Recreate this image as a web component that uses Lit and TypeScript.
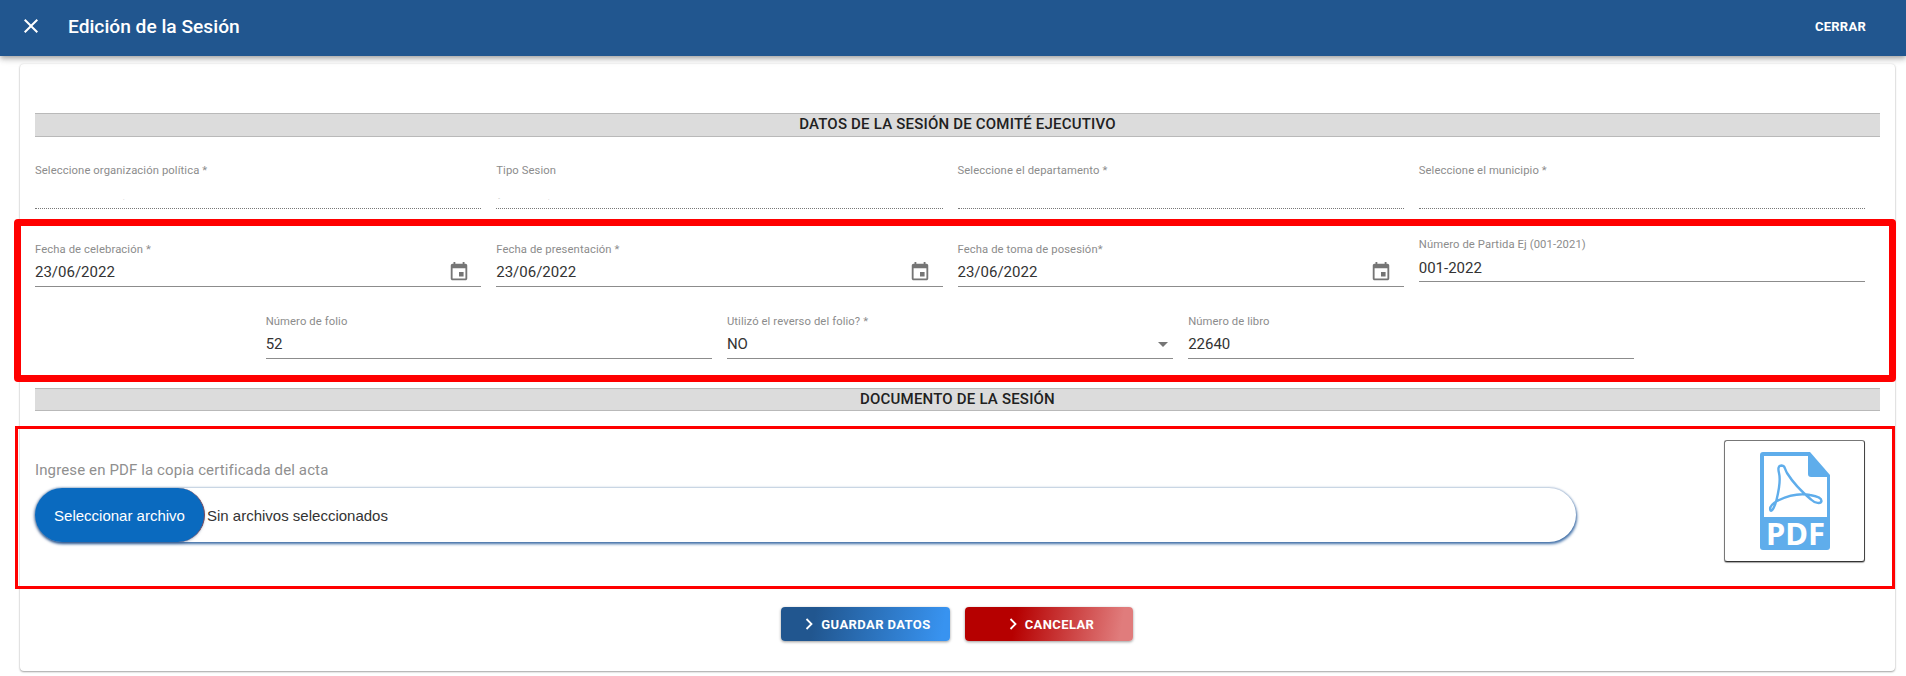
import { LitElement, html, css, svg } from "lit";
import { customElement } from "lit/decorators.js";

const calendar = html`<svg class="cal" viewBox="0 0 24 24"><path d="M17 12h-5v5h5v-5zM16 1v2H8V1H6v2H5c-1.11 0-1.99.9-1.99 2L3 19c0 1.1.89 2 2 2h14c1.1 0 2-.9 2-2V5c0-1.1-.9-2-2-2h-1V1h-2zm3 18H5V8h14v11z"/></svg>`;
const chevron = html`<svg class="chev" viewBox="0 0 8 12"><path d="M1.5 1 L6.5 6 L1.5 11"/></svg>`;

@customElement("app-root")
export class AppRoot extends LitElement {
  static styles = css`
    :host { display: block; height: 676px; overflow: hidden; background: #fff; font-family: Roboto, sans-serif; color: #212121; }
    .top { display: flex; align-items: center; height: 56px; box-sizing: border-box; padding: 0 40px 4px 19px; background: #21568f; color: #fff;
      box-shadow: 0 2px 4px -1px rgba(0,0,0,.2), 0 4px 5px 0 rgba(0,0,0,.14), 0 1px 10px 0 rgba(0,0,0,.12); position: relative; z-index: 1; }
    .close { width: 24px; height: 24px; fill: #fff; margin-right: 25px; }
    .title { font-size: 19.2px; font-weight: 500; flex: 1; }
    .cerrar { font-size: 13px; font-weight: 700; letter-spacing: .25px; }
    .card { margin: 8px 11px 0 20px; padding: 49px 15px 30px; background: #fff; border-radius: 4px;
      box-shadow: 0 1px 2px rgba(0,0,0,.35), 0 0 2px rgba(0,0,0,.1); }
    .bar { height: 24px; box-sizing: border-box; line-height: 21px; text-align: center; background: #dcdcdc; border-top: 1px solid #b9b9b9; border-bottom: 1px solid #b9b9b9;
      font-size: 15px; font-weight: 500; letter-spacing: .2px; color: #212121; }
    .bar.second { height: 23px; line-height: 20px; }
    .row { display: grid; grid-template-columns: repeat(4, 1fr); gap: 15px; margin-right: 15px; align-items: start; }
    .row.first { margin-top: 26px; }
    .row.first .val { height: 28px; }
    .row.center { display: flex; justify-content: center; margin-top: 27px; }
    .row.center .field { width: 446.25px; }
    .box1 { margin: 10px -16px 6px -21px; border: 7px solid #f00; border-radius: 4px; padding: 16px 9px 16px 14px; }
    .raised { margin-top: -5px; }
    .raised .val { padding-bottom: 0; }
    .lab { font-size: 11.25px; line-height: 16px; font-weight: 400; letter-spacing: .1px; color: #8c8c8c; white-space: nowrap; }
    .val { display: flex; align-items: center; justify-content: space-between; margin-top: 2px; height: 27px; box-sizing: border-box; padding-bottom: 2px;
      font-size: 15px; font-weight: 400; color: #333; border-bottom: 1px solid #8c8c8c; }
    .val.dot { border-bottom: 1px dotted #777; font-size: 6px; color: #aaa; justify-content: flex-start; align-items: flex-end; padding-bottom: 7px; }
    .mark1 { margin-left: 88px; }
    .mark2 { margin-left: 2px; }
    .mark3 { margin-left: 48px; }
    .cal { width: 22px; height: 22px; fill: #757575; margin-right: 11.5px; flex: none; }
    .arrow { width: 10px; height: 5px; fill: #757575; margin-right: 5px; flex: none; }
    .box2 { display: flex; justify-content: space-between; align-items: flex-start; margin: 15px -15px 0 -20px; border: 3px solid #f00; padding: 11px 27px 24px 17px; }
    .upload { width: 1541px; }
    .uplab { margin-top: 22px; font-size: 15px; line-height: 16px; font-weight: 400; letter-spacing: .12px; color: #8f8f8f; }
    .pill { display: flex; align-items: center; margin-top: 10px; height: 54px; border-radius: 27px; background: #fff;
      box-shadow: 1px 2px 3px #3b6ba5, 0 -1px 2px rgba(70,110,160,.35); font-family: "Liberation Sans", Arial, sans-serif; font-size: 15px; color: #333; }
    .pick { display: flex; align-items: center; justify-content: center; width: 170px; height: 54px; box-sizing: border-box; margin-right: 2px; border-radius: 27px; background: #0a6abf; color: #fff;
      border-right: 1px solid #7a4a5c; box-shadow: -1px 1px 3px rgba(30,60,110,.5); font-size: 15px; }
    .pdf { display: flex; align-items: center; justify-content: center; width: 141px; height: 122px; box-sizing: border-box; border: 1px solid #777; border-bottom-color: #333; border-right-color: #444; border-radius: 3px; box-shadow: 0 1px 1px rgba(0,0,0,.35); background: #fff; }
    .pdf svg { width: 70px; height: 98px; overflow: visible; }
    .pdf text { font-family: "Noto Sans", sans-serif; font-weight: 700; font-size: 31px; fill: #fff; }
    .actions { display: flex; justify-content: center; gap: 15px; margin-top: 18px; padding-right: 1px; }
    .btn { display: flex; align-items: center; justify-content: center; gap: 8px; height: 34px; box-sizing: border-box; padding-left: 5px; border-radius: 4px; color: #fff; font-size: 13px; font-weight: 700; letter-spacing: .4px;
      box-shadow: 0 1px 3px rgba(0,0,0,.4); }
    .save { width: 169px; background: linear-gradient(100deg, #21568f 20%, #3893f0 95%); }
    .cancel { width: 168px; background: linear-gradient(100deg, #b60000 30%, #e07c7c 92%); }
    .chev { width: 8px; height: 12px; fill: none; stroke: #fff; stroke-width: 1.8; }
  `;

  private field(label: string, value: unknown, extra = "") {
    return html`<div class="field ${extra}"><div class="lab">${label}</div><div class="val">${value}</div></div>`;
  }

  private dotted(label: string, marks: unknown = "") {
    return html`<div class="field"><div class="lab">${label}</div><div class="val dot">${marks}</div></div>`;
  }

  render() {
    return html`
      <header class="top">
        <svg class="close" viewBox="0 0 24 24"><path d="M19 6.41L17.59 5 12 10.59 6.41 5 5 6.41 10.59 12 5 17.59 6.41 19 12 13.41 17.59 19 19 17.59 13.41 12z"/></svg>
        <div class="title">Edición de la Sesión</div>
        <div class="cerrar">CERRAR</div>
      </header>
      <main class="card">
        <div class="bar">DATOS DE LA SESIÓN DE COMITÉ EJECUTIVO</div>
        <div class="row first">
          ${this.dotted("Seleccione organización política *", html`<span class="mark1">.</span>`)}
          ${this.dotted("Tipo Sesion", html`<span class="mark2">-</span><span class="mark3">.</span>`)}
          ${this.dotted("Seleccione el departamento *")}
          ${this.dotted("Seleccione el municipio *")}
        </div>
        <section class="box1">
          <div class="row">
            ${this.field("Fecha de celebración *", html`<span>23/06/2022</span>${calendar}`)}
            ${this.field("Fecha de presentación *", html`<span>23/06/2022</span>${calendar}`)}
            ${this.field("Fecha de toma de posesión*", html`<span>23/06/2022</span>${calendar}`)}
            ${this.field("Número de Partida Ej (001-2021)", html`<span>001-2022</span>`, "raised")}
          </div>
          <div class="row center">
            ${this.field("Número de folio", html`<span>52</span>`)}
            ${this.field("Utilizó el reverso del folio? *", html`<span>NO</span><svg class="arrow" viewBox="0 0 10 5"><path d="M0 0h10L5 5z"/></svg>`)}
            ${this.field("Número de libro", html`<span>22640</span>`)}
          </div>
        </section>
        <div class="bar second">DOCUMENTO DE LA SESIÓN</div>
        <section class="box2">
          <div class="upload">
            <div class="uplab">Ingrese en PDF la copia certificada del acta</div>
            <div class="pill"><div class="pick">Seleccionar archivo</div>Sin archivos seleccionados</div>
          </div>
          <div class="pdf">
            <svg viewBox="0 0 70 98">
              ${svg`<path d="M3 0H50L70 23V95a3 3 0 0 1-3 3H3a3 3 0 0 1-3-3V3a3 3 0 0 1 3-3z" fill="#5fadeb"/>
              <path d="M4 4H48V22a3 3 0 0 0 3 3H67V65H4z" fill="#fff"/>
              <path d="M10.5 58.5C9 55 12 52 17 49C27 44 40 41 50 43C56 44 61.5 46 61.5 49C61 52 55 51.5 51 47.5C42 40 32 29 27 21C24 15 25 14 21.5 13.5C18 13.5 18 17 19 21C20.5 27 19 38 16.5 48C15 54 12 60 10.5 58.5Z" fill="none" stroke="#5fadeb" stroke-width="2.4"/>
              <text x="35.5" y="93" text-anchor="middle">PDF</text>`}
            </svg>
          </div>
        </section>
        <div class="actions">
          <div class="btn save">${chevron}GUARDAR DATOS</div>
          <div class="btn cancel">${chevron}CANCELAR</div>
        </div>
      </main>
    `;
  }
}
